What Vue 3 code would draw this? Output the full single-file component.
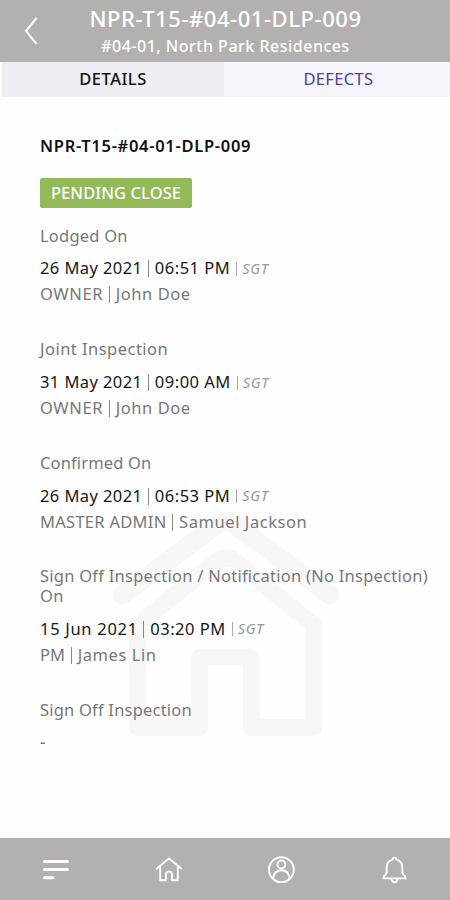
<script setup>
const sections = [
  { label: 'Lodged On', labelCls: 'l1', date: '26 May 2021', time: '06:51 PM', role: 'OWNER', roleCls: 'owner', name: 'John Doe' },
  { label: 'Joint Inspection', labelCls: 'l2', date: '31 May 2021', time: '09:00 AM', role: 'OWNER', roleCls: 'owner', name: 'John Doe' },
  { label: 'Confirmed On', labelCls: 'l3', date: '26 May 2021', time: '06:53 PM', role: 'MASTER ADMIN', roleCls: 'admin', name: 'Samuel Jackson' },
  { label: 'Sign Off Inspection / Notification (No Inspection) On', labelCls: 'l4', date: '15 Jun 2021', dateCls: 'june', time: '03:20 PM', role: 'PM', roleCls: 'pm', name: 'James Lin' },
  { label: 'Sign Off Inspection', labelCls: 'l5' },
]
</script>

<template>
  <div class="screen">
    <header class="header">
      <svg class="back" width="14" height="30" viewBox="0 0 14 30"><path d="M12.5 2 L2 15 L12.5 28" /></svg>
      <div class="titles">
        <div class="title">NPR-T15-#04-01-DLP-009</div>
        <div class="subtitle">#04-01, North Park Residences</div>
      </div>
    </header>
    <nav class="tabs">
      <div class="tab active">DETAILS</div>
      <div class="tab defects">DEFECTS</div>
    </nav>
    <main class="content">
      <svg class="watermark" width="232" height="232" viewBox="0 0 232 232">
        <path class="roof" d="M10 87 L106 16 Q114 10.5 122 16 L218 87" />
        <path d="M25.5 219.5 V117 L105 53 Q114 47 123 53 L201.5 117 V219.5 H139.5 V152 Q139.5 149 136.5 149 H90.5 Q87.5 149 87.5 152 V219.5 Z" />
      </svg>
      <h1 class="ref">NPR-T15-#04-01-DLP-009</h1>
      <div class="status">PENDING CLOSE</div>
      <section v-for="s in sections" :key="s.label" class="entry">
        <div class="label" :class="s.labelCls">{{ s.label }}</div>
        <template v-if="s.date">
          <div class="when">
            <span class="date" :class="s.dateCls">{{ s.date }}</span><i class="bar"></i><span class="time">{{ s.time }}</span><i class="bar small"></i><span class="zone">SGT</span>
          </div>
          <div class="who"><span :class="s.roleCls">{{ s.role }}</span><i class="bar"></i><span class="name">{{ s.name }}</span></div>
        </template>
        <div v-else class="who dash">-</div>
      </section>
    </main>
    <footer class="footer">
      <div class="item"><svg width="28" height="28" viewBox="0 0 28 28"><path class="thick" d="M2.6 5.5 H25.3 M2.6 13.5 H25.3 M2.6 21.8 H11" /></svg></div>
      <div class="item"><svg width="28" height="28" viewBox="0 0 28 28"><path d="M1.8 12.6 L14 2.5 L26.2 12.6 M5.2 10.5 V24.3 H11 V18.5 Q11 15.5 14 15.5 Q17 15.5 17 18.5 V24.3 H22.8 V10.5" /></svg></div>
      <div class="item"><svg width="28" height="28" viewBox="0 0 28 28"><circle cx="14.4" cy="13.7" r="12.4" /><circle cx="14.4" cy="8.5" r="4" /><path d="M6.2 22.7 Q7 14.2 14.4 14.2 Q21.8 14.2 22.6 22.7" /></svg></div>
      <div class="item"><svg width="28" height="28" viewBox="0 0 28 28"><path d="M12.6 3.6 Q12.6 1.6 14.5 1.6 Q16.4 1.6 16.4 3.6 C20.5 4.6 22.3 7.5 22.3 11.5 V16.5 C22.3 18.5 25.7 19.2 25.7 22.4 H3.3 C3.3 19.2 6.7 18.5 6.7 16.5 V11.5 C6.7 7.5 8.5 4.6 12.6 3.6 Z M11.5 23 Q11.8 26.3 14.5 26.3 Q17.2 26.3 17.5 23" /></svg></div>
    </footer>
  </div>
</template>

<style>
body { margin: 0; background: #fff; }
</style>

<style scoped>
.screen { width: 450px; height: 900px; display: flex; flex-direction: column; overflow: hidden; background: #fefefe; font-family: "Noto Sans", "Open Sans", sans-serif; }
.header { position: relative; height: 62px; flex: none; background: #b4b0af; color: #fff; box-sizing: border-box; padding-top: 4px; }
.back { position: absolute; left: 24px; top: 16px; }
.back path { fill: none; stroke: #fff; stroke-width: 2; }
.titles { text-align: center; white-space: nowrap; }
.title { font-size: 22px; line-height: 28px; font-weight: 500; letter-spacing: 0.56px; padding-left: 1px; }
.subtitle { font-size: 16px; line-height: 28px; font-weight: 500; letter-spacing: 0.5px; padding-left: 1px; }
.tabs { height: 35px; flex: none; display: flex; padding-left: 2px; }
.tab { box-sizing: border-box; width: 222px; background: #efeef5; color: #111; font-size: 16.5px; line-height: 34px; text-align: center; font-weight: 500; letter-spacing: 0.5px; }
.defects { flex: 1; background: #f6f5fb; color: #47429a; font-weight: 400; letter-spacing: 0.35px; padding-left: 3px; }
.content { position: relative; z-index: 0; flex: 1; padding: 36px 20px 0 40px; color: #777; font-size: 16.5px; }
.watermark { position: absolute; z-index: -1; left: 112px; top: 411px; }
.watermark path { fill: none; stroke: #f7f7f7; stroke-width: 17; stroke-linecap: round; stroke-linejoin: round; }
.watermark .roof { stroke-width: 19; }
.ref { margin: 0; font-size: 16.5px; line-height: 26px; font-weight: 600; color: #111; white-space: nowrap; letter-spacing: 0.7px; }
.status { width: 152px; height: 30px; margin: 19px 0 17.7px; background: #92ba58; border-radius: 2px; color: #fff; font-size: 16.5px; line-height: 30px; font-weight: 500; text-align: center; white-space: nowrap; letter-spacing: 0.07px; }
.entry { margin-bottom: 31.8px; }
.label { line-height: 19.5px; margin-bottom: 10.3px; letter-spacing: 0.21px; }
.l2 { letter-spacing: 0.47px; }
.l3 { letter-spacing: 0.14px; }
.l4 { letter-spacing: 0.25px; }
.when, .who { box-sizing: border-box; display: flex; align-items: center; height: 26px; padding-bottom: 1px; white-space: nowrap; }
.when { color: #171717; }
.date { letter-spacing: 0.41px; }
.june { letter-spacing: 0.7px; }
.time { letter-spacing: 0.5px; }
.pm { letter-spacing: 0.1px; }
.owner { letter-spacing: 0.62px; }
.admin { letter-spacing: 0.28px; }
.name { letter-spacing: 0.57px; }
.bar { width: 1px; height: 17px; margin: 2px 6px 0 5.5px; background: #888; flex: none; }
.bar.small { height: 14px; margin-left: 6px; margin-right: 5px; background: #aaa; }
.zone { color: #999; font-size: 14.5px; font-style: italic; letter-spacing: 0.6px; }
.dash { font-weight: 500; }
.footer { height: 62px; flex: none; display: flex; background: #b4b0af; }
.item { flex: 1; display: flex; align-items: center; justify-content: center; padding-top: 1px; }
.item svg { fill: none; stroke: #fff; stroke-width: 1.9; stroke-linecap: round; stroke-linejoin: round; }
.thick { stroke-width: 3; }
</style>
